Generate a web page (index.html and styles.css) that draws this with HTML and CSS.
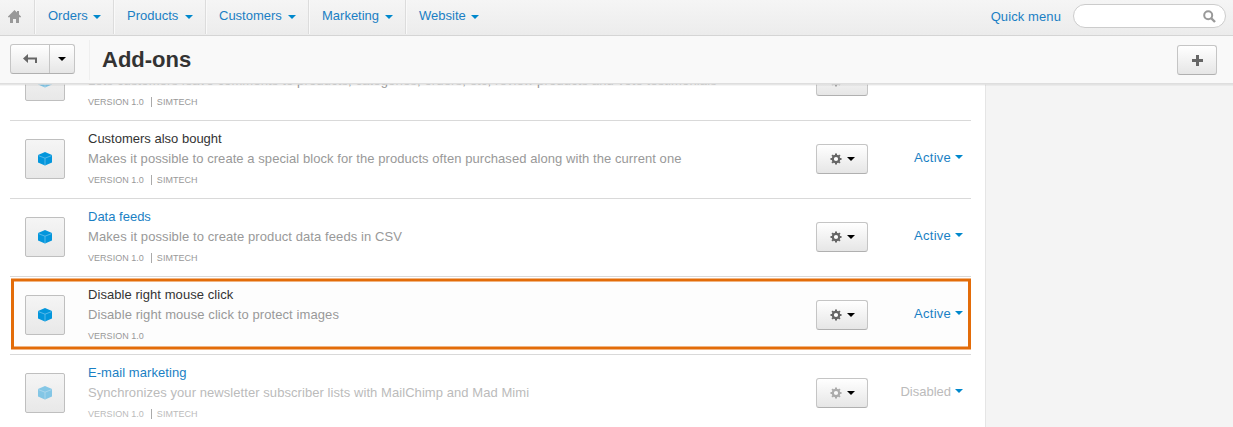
FILE: index.html
```html
<!DOCTYPE html>
<html lang="en">
<head>
<meta charset="utf-8">
<title>Add-ons</title>
<link rel="stylesheet" href="styles.css">
</head>
<body>
<svg class="defs" width="0" height="0" aria-hidden="true">
  <symbol id="cube" viewBox="0 0 14 14">
    <path fill="#0396dc" d="M7 0 14 3.1V10.5L7 13.6 0 10.5V3.1Z"/>
    <path fill="none" stroke="#6cc1ec" stroke-width="0.8" d="M0.4 3.6 7 6.2 13.6 3.6M7 6.2V13.2"/>
  </symbol>
  <symbol id="gear" viewBox="0 0 12 12">
    <path fill="none" stroke="#666" stroke-width="2" d="M6 0.5V2.5M6 9.5V11.5M0.5 6H2.5M9.5 6H11.5M2.1 2.1 3.4 3.4M8.6 8.6 9.9 9.9M9.9 2.1 8.6 3.4M3.4 8.6 2.1 9.9"/>
    <circle cx="6" cy="6" r="3.2" fill="#fff" stroke="#666" stroke-width="2.2"/>
  </symbol>
</svg>
<nav class="navbar">
  <a class="home"><svg width="13" height="13" viewBox="0 0 13 13"><path fill="#999" d="M6.5 0 0 6.5V7.3H2V13H5V9H8V13H11V7.3H13V6.5L11 4.5V1H9V2.5Z"/></svg></a>
  <a class="item orders"><span>Orders</span><i class="caret"></i></a>
  <a class="item products"><span>Products</span><i class="caret"></i></a>
  <a class="item customers"><span>Customers</span><i class="caret"></i></a>
  <a class="item marketing"><span>Marketing</span><i class="caret"></i></a>
  <a class="item website"><span>Website</span><i class="caret"></i></a>
  <a class="quick">Quick menu</a>
  <div class="search"><svg width="13" height="13" viewBox="0 0 13 13"><circle cx="5.2" cy="5.2" r="4" fill="none" stroke="#999" stroke-width="2"/><path d="M8 8 12 12" stroke="#999" stroke-width="2.4"/></svg></div>
</nav>
<header class="titlebar">
  <div class="back btn"><span class="back-main"><svg width="15" height="10" viewBox="0 0 15 10"><path fill="#666" d="M0 4.5 5 0V3.5H14V9H12V5.5H5V9Z"/></svg></span><span class="back-more"><i class="caret dark"></i></span></div>
  <h1>Add-ons</h1>
  <div class="add btn"><svg width="11" height="11" viewBox="0 0 11 11"><path fill="#666" d="M4 0H7V4H11V7H7V11H4V7H0V4H4Z"/></svg></div>
</header>
<main class="main">
  <section class="list">
    <article class="row off">
      <div class="icon"><svg width="14" height="14"><use href="#cube"/></svg></div>
      <div class="info"><div class="name link"></div><div class="desc d0"><span>Lets customers leave comments to products, categories, orders, etc, review products and vote testimonials</span></div><div class="meta dim"><span>VERSION 1.0</span><i></i><span>SIMTECH</span></div></div>
      <div class="tools btn"><svg width="12" height="12"><use href="#gear"/></svg><i class="caret dark"></i></div>
      <div class="status"></div>
    </article>
    <article class="row">
      <div class="icon"><svg width="14" height="14"><use href="#cube"/></svg></div>
      <div class="info"><div class="name"><span>Customers also bought</span></div><div class="desc"><span>Makes it possible to create a special block for the products often purchased along with the current one</span></div><div class="meta"><span>VERSION 1.0</span><i></i><span>SIMTECH</span></div></div>
      <div class="tools btn"><svg width="12" height="12"><use href="#gear"/></svg><i class="caret dark"></i></div>
      <div class="status"><span>Active</span><i class="caret"></i></div>
    </article>
    <article class="row">
      <div class="icon"><svg width="14" height="14"><use href="#cube"/></svg></div>
      <div class="info"><div class="name link"><span>Data feeds</span></div><div class="desc wide"><span>Makes it possible to create product data feeds in CSV</span></div><div class="meta"><span>VERSION 1.0</span><i></i><span>SIMTECH</span></div></div>
      <div class="tools btn"><svg width="12" height="12"><use href="#gear"/></svg><i class="caret dark"></i></div>
      <div class="status"><span>Active</span><i class="caret"></i></div>
    </article>
    <article class="row marked">
      <svg class="mark" width="961" height="77"><rect x="2.5" y="3" width="957" height="68" fill="none" stroke="#e36c09" stroke-width="3"/></svg>
      <div class="icon"><svg width="14" height="14"><use href="#cube"/></svg></div>
      <div class="info"><div class="name spaced"><span>Disable right mouse click</span></div><div class="desc wide"><span>Disable right mouse click to protect images</span></div><div class="meta"><span>VERSION 1.0</span></div></div>
      <div class="tools btn"><svg width="12" height="12"><use href="#gear"/></svg><i class="caret dark"></i></div>
      <div class="status"><span>Active</span><i class="caret"></i></div>
    </article>
    <article class="row off">
      <div class="icon"><svg width="14" height="14"><use href="#cube"/></svg></div>
      <div class="info"><div class="name link spaced"><span>E-mail marketing</span></div><div class="desc"><span>Synchronizes your newsletter subscriber lists with MailChimp and Mad Mimi</span></div><div class="meta"><span>VERSION 1.0</span><i></i><span>SIMTECH</span></div></div>
      <div class="tools btn"><svg width="12" height="12"><use href="#gear"/></svg><i class="caret dark"></i></div>
      <div class="status"><span>Disabled</span><i class="caret"></i></div>
    </article>
  </section>
  <aside class="side"></aside>
</main>
</body>
</html>
```
FILE: styles.css
```css
* { box-sizing: border-box; }
body { margin: 0; height: 427px; overflow: hidden; display: flex; flex-direction: column; background: #fff; font: 13px/20px "Liberation Sans", Arial, sans-serif; color: #333; }
svg { display: block; flex: none; }
.defs { position: absolute; }
.caret { flex: none; width: 8px; height: 4px; background: #08c; clip-path: polygon(0 0, 100% 0, 50% 100%); }
.caret.dark { background: #000; }
.navbar { flex: none; display: flex; height: 36px; background: linear-gradient(#f5f5f5, #ececec); border-bottom: 1px solid #d5d5d5; color: #1a7fc4; }
.home { width: 35px; height: 34px; padding: 10px 0 0 8px; border-right: 1px solid #dcdcdc; }
.item { height: 34px; display: flex; justify-content: space-between; padding: 6px 12px 0 13px; border-right: 1px solid #dcdcdc; box-shadow: inset 1px 0 #f9f9f9; }
.item .caret { margin-top: 9px; }
.orders { width: 79px; }
.products { width: 92px; }
.customers { width: 103px; padding-left: 13px; }
.marketing { width: 97px; }
.website { width: 86px; border: 0; padding-right: 13px; }
.quick { margin-left: auto; padding-top: 7px; letter-spacing: 0.1px; }
.search { width: 153px; height: 24px; margin: 4px 7px 0 12px; padding: 5px 9px; display: flex; justify-content: flex-end; background: #fff; border: 1px solid #ccc; border-radius: 12px; }
.titlebar { flex: none; position: relative; z-index: 1; display: flex; height: 47px; padding: 8px 16px 0 10px; background: #f9f9f9; box-shadow: 0 1px #dedede, 0 2px rgba(224, 224, 224, 0.7), 0 3px rgba(0, 0, 0, 0.04); }
.btn { border: 1px solid #c5c5c5; border-bottom-color: #b0b0b0; border-radius: 3px; background: linear-gradient(#fff, #e6e6e6); display: flex; align-items: center; justify-content: center; height: 30px; }
.back { width: 65px; }
.back-main { width: 39px; height: 28px; display: flex; align-items: center; justify-content: center; border-right: 1px solid #c5c5c5; }
.back-more { flex: 1; display: flex; justify-content: center; }
h1 { margin: -4px 0 0 14px; padding: 0 0 0 12px; height: 40px; border-left: 1px solid #efefef; font-size: 22px; line-height: 40px; color: #333; }
.add { width: 40px; margin: 1px 0 0 auto; }
.main { flex: 1; min-height: 0; display: flex; overflow: hidden; }
.list { width: 985px; padding-left: 10px; margin-top: -41px; }
.row { position: relative; display: flex; width: 961px; height: 78px; border-top: 1px solid #d9d9d9; }
.icon { width: 40px; height: 40px; margin: 18px 23px 0 15px; display: flex; align-items: center; justify-content: center; border: 1px solid #bfbfbf; border-radius: 2px; background: linear-gradient(#f5f5f5, #e8e8e8); }
.info { width: 728px; padding-top: 8px; white-space: nowrap; }
.name { height: 20px; }
.spaced { letter-spacing: 0.06px; }
.desc { color: #999; letter-spacing: 0.065px; }
.desc.wide { letter-spacing: 0.09px; }
.desc.d0 { letter-spacing: 0.14px; }
.link { color: #1a7fc4; }
.meta { display: flex; align-items: center; height: 20px; padding-top: 3px; font-size: 9px; line-height: 17px; color: #999; letter-spacing: 0.03px; }
.meta i { width: 1px; height: 10px; margin: 0 6px 1px 7px; background: #aaa; }
.meta i + span { margin-left: -1px; }
.tools { width: 52px; margin-top: 23px; gap: 5px; padding-left: 1px; }
.status { margin: 27px 8px 0 auto; display: flex; gap: 4px; color: #1a7fc4; }
.status span { letter-spacing: 0.25px; }
.off .status span { letter-spacing: 0; }
.status .caret { margin-top: 7px; }
.off .icon svg { opacity: 0.45; }
.off .tools svg { opacity: 0.5; }
.off .desc, .off .meta, .off .status { color: #bbb; }
.off .dim, .off .d0 { color: #999; }
.mark { position: absolute; left: 0; top: 0; }
.marked { background: linear-gradient(#fdfdfd, #fdfdfd) 3px 2px / 955px 70px no-repeat; }
.side { flex: 1; background: #f4f4f4; border-left: 1px solid #e5e5e5; }
```
